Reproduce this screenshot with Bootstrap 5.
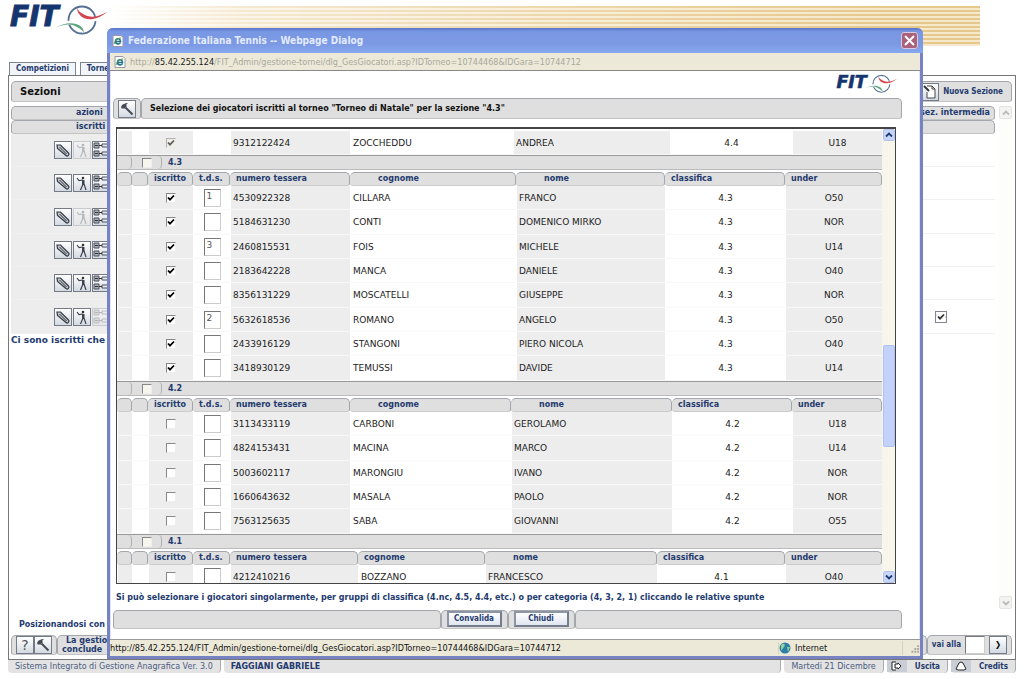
<!DOCTYPE html>
<html lang="it">
<head>
<meta charset="utf-8">
<meta name="viewport" content="width=device-width, initial-scale=1">
<title>Federazione Italiana Tennis</title>
<link href="https://cdn.jsdelivr.net/npm/bootstrap@5.3.0/dist/css/bootstrap.min.css" rel="stylesheet">
<script src="https://cdn.jsdelivr.net/npm/bootstrap@5.3.0/dist/js/bootstrap.bundle.min.js"></script>
<style>
:root{--navy:#233a6e;--bar:#dfdfdf;--line:#a3a7ab;--cell:#ededed}
html{font-size:16px}
body{font:9px/12px "DejaVu Sans",sans-serif;color:#222;background:#fff;min-height:100vh;overflow:hidden}
.tight{font-family:"DejaVu Sans Condensed","DejaVu Sans",sans-serif}
.navy{color:var(--navy)}
.bar{background:var(--bar);border:1px solid var(--line);border-bottom-color:#c4c4c4;border-radius:5px 5px 3px 3px}
.masthead{height:62px;padding:6px 44px 0 10px}
.stripes{height:40px;background:linear-gradient(90deg,#fff 0,rgba(255,255,255,.6) 15%,rgba(255,255,255,.2) 60%,transparent 90%),repeating-linear-gradient(180deg,#e6c88c 0 2px,#f6e8ca 2px 4px)}
.logo{display:block;overflow:visible}
.logo text{font:italic bold 28px "DejaVu Sans",sans-serif;fill:#15356f;stroke:#15356f;stroke-width:1}
.tabs{padding-left:9px;height:13px}
.tabs a{border:1px solid #7d858e;border-bottom:0;background:#f1f4f8;padding:0 6px;line-height:12px;font-size:8px;font-weight:bold;text-decoration:none;color:var(--navy)}
.panel{border:1px solid #777;margin:0 8px;padding:5px 3px 4px 2px}
.ttl{height:21px;padding-left:8px;font-size:10px;color:#111;font-weight:bold}
.colhead{height:14px;font-size:8px;font-weight:bold;color:var(--navy)}
.under-scroll{width:13px;background:#fdfdf9;color:#bbb;margin-bottom:10px}
.sbtn{width:13px;height:13px;padding:0;border:1px solid #e4e4e0;background:#f3f3ef;border-radius:2px;color:inherit;display:flex;align-items:center;justify-content:center}
.item{height:33px;border-bottom:1px solid #f0f0f0}
.item:nth-child(3n){height:34px}
.item .acts{width:110px;background:var(--cell);padding-left:43px;gap:1px}
.ib{width:18px;height:18px;padding:0;border:1px solid #747b87;background:linear-gradient(#fff,#d4dae2);display:flex;align-items:center;justify-content:center;flex:none}
.ib svg{width:16px;height:16px}
.ib:disabled{opacity:.3}
.foot{margin:0 8px 6px;height:13px;font-size:8px;line-height:14px;color:#4b5c80;gap:3px}
.foot>*{background:#e3e3e3;border-right:1px solid #a9adb2;border-radius:0 0 4px 4px;padding:0 7px}
.foot a{color:var(--navy);font-weight:bold;text-decoration:none}
.pic{background:#c9ced6;width:20px}

.dlg{position:absolute;left:107px;right:101px;top:28px;bottom:20px;background:#fff;border:3px solid #7782c3;border-top:0;border-radius:6px 6px 0 0;box-shadow:inset 0 0 0 1px #e0e4f5}
.dtitle{height:25px;margin:0 -3px;padding:0 5px;border-radius:6px 6px 0 0;background:linear-gradient(#5b74c9,#7998e4 15%,#7b98e3 60%,#86a8ee);color:#e3ebff;font-size:10px;font-weight:bold;flex:none}
.closer{width:17px;height:17px;padding:0;border:1px solid #dcc9de;border-radius:3px;background:#a8627c;display:flex;align-items:center;justify-content:center}
.addr{height:18px;flex:none;background:#ece9d8;border-bottom:1px solid #888;font-size:9px;color:#aaa89c;padding-left:4px}
.addr b{font-weight:normal;color:#222}
.dhead{height:27px;flex:none;padding:4px 22px 0 0}
.dtool{height:21px;margin:0 18px 0 3px;flex:none}
.dtool .h{font-size:8px;font-weight:bold;color:#111;padding-left:8px}
.listbox{margin:8px 24px 0 6px;border:1px solid #444;border-top-width:2px;min-height:0}
.rows{overflow:hidden}
.rows table{width:100%;table-layout:fixed;border-collapse:separate;border-spacing:0;font-size:9px;color:#222}
.rows td{height:24px;padding:0 0 0 2px;border-bottom:1px solid #f8f8f8;border-left:1px solid #fff;vertical-align:middle;white-space:nowrap}
.rows tbody tr:nth-child(3n+2) td{height:25px}
.rows td:nth-child(odd){background:var(--cell)}
.rows td:nth-child(n+8),.rows td:nth-child(3),.rows td:nth-child(4){text-align:center;padding:0}
.rows th{height:14px;padding:0 0 0 6px;font-size:8px;line-height:12px;color:var(--navy);background:var(--bar);border:1px solid var(--line);border-bottom-color:#ccc;border-left:0;border-radius:5px 5px 3px 3px;white-space:nowrap}
.rows .name{padding-left:28px}
.rows .first td{height:26px;border-top:2px solid #fff}
.band{height:15px;background:var(--bar);border-top:1px solid #999;border-bottom:1px solid #bbb;margin-bottom:2px;font-size:8px;font-weight:bold;color:var(--navy)}
.band span{border-right:1px solid #b0b0b0;border-radius:4px;height:13px}
.band .b1{width:15px}
.band .b2{width:30px}
.band div{padding-left:6px}
.ck{appearance:none;width:10px;height:10px;margin:0;border:1px solid #888;border-right-color:#eee;border-bottom-color:#eee;background:#fff;display:block}
.ck:checked{background:#fff url("data:image/svg+xml,%3Csvg xmlns='http://www.w3.org/2000/svg' viewBox='0 0 8 8'%3E%3Cpath d='M1 3.5l2 2.2L7 1.5' fill='none' stroke='%23000' stroke-width='1.8'/%3E%3C/svg%3E") center/8px}
.ck:disabled{background-color:#f3f1e4;opacity:.6}
.ck.flat{width:12px;height:12px;border-color:#667;opacity:.8}
.band .ck{background:#f7f5ec}
td .ck{margin:0 auto}
.tds{width:17px;height:18px;border:1px solid #777;border-right-color:#ccc;border-bottom-color:#ccc;background:#fff;padding:0 0 3px 2px;font-size:9px;line-height:12px;color:#555;display:block;margin:0 auto;border-radius:0}
.vscroll{width:13px;background:#f8f6ea;flex:none;padding-left:1px}
.vscroll button{width:12px;height:12px;padding:0;border:1px solid #b3c3f0;background:#c6d5fa;border-radius:2px;display:flex;align-items:center;justify-content:center}
.thumb{height:102px;width:12px;background:#c3d2fb;border:1px solid #b0c2f2;border-radius:2px}
.grow-a{flex:204}
.grow-b{flex:124}
.hint{font-size:8px;font-weight:bold;margin:8px 0 6px 6px;flex:none}
.dbtns{height:19px;margin:0 18px 10px 3px;flex:none}
.mid{width:67px}
.pb{width:55px;height:16px;padding:0;border:2px solid #8b95a4;border-right-color:#737d8c;border-bottom-color:#737d8c;background:linear-gradient(#fff,#dfe5ef);font-size:8px;line-height:10px;font-weight:bold;color:var(--navy)}
.stat{height:17px;flex:none;background:#ece9d8;border-top:1px solid #999;font-size:9px;color:#111}
.zone{width:124px;border-left:1px solid #d5d2c2}
.grip{width:18px;border-left:1px solid #d5d2c2}
.fine{font-size:8px}
.tworow{line-height:9px}
.help{font-size:14px;color:#555}
.page-no{width:20px}
</style>
</head>
<body class="d-flex flex-column">
<svg width="0" height="0" class="position-absolute" aria-hidden="true">
  <defs>
    <symbol id="hammer" viewBox="0 0 16 16"><path d="M2 6c1-3 4-4 7-4L7 4l1 1-3 3-1-1-1 1z" fill="#454b55"/><path d="M6.500 6.500l7 7" stroke="#454b55" stroke-width="2"/></symbol>
    <symbol id="pencil" viewBox="0 0 16 16"><path d="M2 3l3.500 0 8 8c1.500 1.500-1 4-2.500 2.500L2.500 6.500z" fill="#c3c7cd" stroke="#343a44" stroke-width="1.200"/><path d="M4.500 5l7 7" stroke="#343a44"/></symbol>
    <symbol id="player" viewBox="0 0 16 16"><circle cx="9" cy="3" r="1.300" fill="#333"/><path d="M8 5h2.500v5H8z" fill="#3d434d"/><path d="M3 3l2 2.500 4-.5M10 9l2 6M9 9l-2.500 6" fill="none" stroke="#3d434d" stroke-width="1.200"/></symbol>
    <symbol id="draw" viewBox="0 0 16 16"><path d="M1 1h5v5H1zM1 9h5v5H1z" fill="#aab0b9" stroke="#4b515b"/><path d="M9 2h6v3H9zM9 10h6v3H9z" fill="#e8ebef" stroke="#4b515b"/><path d="M2 3.500h3M2 11.500h3M6 3.500h3M6 11.500h3" stroke="#333"/></symbol>
    <symbol id="ie" viewBox="0 0 12 12"><path d="M1 .5h8l2 2v9H1z" fill="#fff" stroke="#99a"/><path d="M3.500 6.500h5c0-4-5-3.500-5 0 0 3 4 3 5 1" fill="none" stroke="#27778e" stroke-width="1.600"/><path d="M2 9c1-4 4-6 7-6" fill="none" stroke="#5a9a3a"/></symbol>
    <symbol id="ball" viewBox="0 0 54 32"><circle cx="28" cy="15" r="13.500" fill="none" stroke="#536f94" stroke-width="1.800"/><path d="M1 23c8-6 24-9 29 4" fill="none" stroke="#fff" stroke-width="4"/><path d="M1 23c8-4 16-5 22-1 4 2 6 4 7 6 0-11-17-13-29-5z" fill="#5da57c"/><path d="M23 5c3 10 16 14 30 3" fill="none" stroke="#fff" stroke-width="4"/><path d="M23 3c1 12 16 16 30 4-9 5-16 6-22 3-4-2-7-4-8-7z" fill="#d3464f"/></symbol>
    <symbol id="up" viewBox="0 0 8 8"><path d="M1 5.500l3-3 3 3" fill="none" stroke="currentColor" stroke-width="1.800"/></symbol>
    <symbol id="down" viewBox="0 0 8 8"><path d="M1 2.500l3 3 3-3" fill="none" stroke="currentColor" stroke-width="1.800"/></symbol>
  </defs>
</svg>

<header class="masthead d-flex">
  <svg class="logo flex-shrink-0" width="98" height="32" viewBox="0 0 98 32" role="img" aria-label="FIT"><text x="0" y="20">FIT</text><use href="#ball" x="44" y="-1" width="54" height="32"/></svg>
  <div class="stripes flex-grow-1"></div>
</header>
<nav class="tabs d-flex tight"><a href="#">Competizioni</a><a href="#" class="ms-1">Tornei</a></nav>

<main class="panel flex-grow-1 d-flex flex-column">
  <div class="d-flex">
    <div class="bar ttl flex-grow-1 d-flex align-items-center">Sezioni</div>
    <div class="bar d-flex align-items-center navy fw-bold tight fine pe-2 gap-1">
      <button class="ib" aria-label="Nuova"><svg viewBox="0 0 16 16"><path d="M5 2h5l3 3v9H5V8M10 2v3h3" fill="#fff" stroke="#444"/><path d="M2 2l5 5" stroke="#333" stroke-width="2"/></svg></button><span>Nuova Sezione</span></div>
  </div>
  <div class="d-flex mt-1 flex-grow-1">
    <div class="flex-grow-1 me-1">
      <div class="bar colhead d-flex justify-content-between align-items-center"><span class="ps-5"><span class="ps-3">azioni</span></span><span class="pe-1">sez. intermedia</span></div>
      <div class="bar colhead d-flex align-items-center ps-5"><span class="ps-3">iscritti</span></div>
      <div id="items"></div>
      <div class="navy fw-bold">Ci sono iscritti che</div>
    </div>
    <div class="under-scroll d-flex flex-column justify-content-between">
      <button class="sbtn" aria-label="Su"><svg width="8" height="8"><use href="#up"/></svg></button>
      <button class="sbtn" aria-label="Giù"><svg width="8" height="8"><use href="#down"/></svg></button>
    </div>
  </div>
  <div class="navy fw-bold fine ps-2 pb-1">Posizionandosi con</div>
  <div class="d-flex fine">
    <div class="bar d-flex align-items-center px-1">
      <button class="ib help" aria-label="Aiuto">?</button>
      <button class="ib" aria-label="Strumenti"><svg><use href="#hammer"/></svg></button>
    </div>
    <div class="bar tworow flex-grow-1 navy fw-bold ps-1"><span class="ps-1">La gestione</span><br>conclude</div>
    <div class="bar d-flex align-items-center navy fw-bold tight px-1 gap-1"><label for="pg">vai alla</label><input id="pg" class="tds page-no"><button class="ib" aria-label="Vai">❯</button></div>
  </div>
</main>
<footer class="foot d-flex">
  <span>Sistema Integrato di Gestione Anagrafica Ver. 3.0</span>
  <span class="flex-grow-1 navy fw-bold">FAGGIANI GABRIELE</span>
  <span>Martedi 21 Dicembre</span>
  <a href="#" class="d-flex gap-2 ps-0 tight"><svg class="pic" height="12" viewBox="0 0 20 12"><path d="M9 2H5v8h4M8 4h3V3l3 3-3 3V8H8z" fill="#fff" stroke="#222"/></svg>Uscita</a>
  <a href="#" class="d-flex gap-2 ps-0 tight"><svg class="pic" height="12" viewBox="0 0 20 12"><path d="M10 2l2 1 3 6-2 1H7L5 9l3-6z" fill="#fff" stroke="#222"/></svg>Credits</a>
</footer>

<section class="dlg d-flex flex-column" role="dialog" aria-label="Federazione Italiana Tennis">
  <div class="dtitle d-flex align-items-center gap-1 tight"><svg width="12" height="12"><use href="#ie"/></svg><span class="flex-grow-1">Federazione Italiana Tennis -- Webpage Dialog</span>
    <button class="closer" aria-label="Chiudi finestra"><svg width="11" height="11"><path d="M1 1l9 9M10 1l-9 9" stroke="#fff" stroke-width="2"/></svg></button></div>
  <div class="addr d-flex align-items-center gap-1 tight"><svg width="12" height="12"><use href="#ie"/></svg><span>http://<b>85.42.255.124</b>/FIT_Admin/gestione-tornei/dlg_GesGiocatori.asp?IDTorneo=10744468&amp;IDGara=10744712</span></div>
  <div class="dhead d-flex justify-content-end"><svg class="logo" width="62" height="20" viewBox="0 0 98 32" role="img" aria-label="FIT"><text x="0" y="20">FIT</text><use href="#ball" x="44" y="-1" width="54" height="32"/></svg></div>
  <div class="dtool d-flex">
    <div class="bar d-flex align-items-center px-1"><button class="ib" aria-label="Strumenti"><svg><use href="#hammer"/></svg></button></div>
    <div class="bar h flex-grow-1 d-flex align-items-center">Selezione dei giocatori iscritti al torneo "Torneo di Natale" per la sezione "4.3"</div>
  </div>
  <div class="listbox d-flex flex-grow-1">
    <div class="rows flex-grow-1" id="rows"></div>
    <div class="vscroll d-flex flex-column">
      <button class="navy" aria-label="Scorri su"><svg width="8" height="8"><use href="#up"/></svg></button>
      <div class="grow-a"></div><div class="thumb"></div><div class="grow-b"></div>
      <button class="navy" aria-label="Scorri giù"><svg width="8" height="8"><use href="#down"/></svg></button>
    </div>
  </div>
  <div class="hint navy">Si può selezionare i giocatori singolarmente, per gruppi di classifica (4.nc, 4.5, 4.4, etc.) o per categoria (4, 3, 2, 1) cliccando le relative spunte</div>
  <div class="dbtns d-flex">
    <div class="bar flex-fill"></div>
    <div class="bar mid d-flex justify-content-center"><button class="pb tight">Convalida</button></div>
    <div class="bar mid d-flex justify-content-center"><button class="pb tight">Chiudi</button></div>
    <div class="bar flex-fill"></div>
  </div>
  <div class="stat d-flex align-items-center tight">
    <span class="flex-grow-1">http://85.42.255.124/FIT_Admin/gestione-tornei/dlg_GesGiocatori.asp?IDTorneo=10744468&amp;IDGara=10744712</span>
    <span class="zone d-flex align-items-center gap-1"><svg width="12" height="12"><circle cx="6" cy="6" r="5.500" fill="#2d7fa5"/><path d="M2 3c3-3 5 0 3 2S3 9 2 8zM8 5l3 0-2 5z" fill="#8fd09a"/></svg>Internet</span>
    <svg class="grip" width="18" height="14" viewBox="0 0 18 14"><path d="M15 5h2M12 8h2M15 8h2M9 11h2M12 11h2M15 11h2" stroke="#aaa79a" stroke-width="2"/></svg>
  </div>
</section>

<script>
// Competition sections listed behind the dialog: which action buttons are off, and the last-column tick
const items = [[1], [], [1], [], [], [2]];
const icons = [['pencil', 'Modifica'], ['player', 'Giocatori'], ['draw', 'Tabellone']];
document.getElementById('items').innerHTML = items.map((off, i) => `
  <div class="item d-flex"><div class="acts d-flex align-items-center">${icons.map(([id, label], k) =>
    `<button class="ib" aria-label="${label}" ${off.includes(k) ? 'disabled' : ''}><svg><use href="#${id}"/></svg></button>`).join('')}</div>
    <div class="flex-grow-1 d-flex align-items-center justify-content-end pe-5">${i === 5 ? '<input type="checkbox" class="ck flat" aria-label="Sezione intermedia" checked>' : ''}</div></div>`).join('');

// Player groups: band title, column widths, ticked state and players
const groups = [
  {cols: [15,16,45,37,120,163,157,122,90], cls: '4.4', on: true, off: true, list: [['', '9312122424', 'ZOCCHEDDU', 'ANDREA', 'U18']]},
  {t: '4.3', cols: [15,16,45,37,120,166,149,120,97], cls: '4.3', on: true, list: [
    ['1','4530922328','CILLARA','FRANCO','O50'], ['','5184631230','CONTI','DOMENICO MIRKO','NOR'],
    ['3','2460815531','FOIS','MICHELE','U14'], ['','2183642228','MANCA','DANIELE','O40'],
    ['','8356131229','MOSCATELLI','GIUSEPPE','NOR'], ['2','5632618536','ROMANO','ANGELO','O50'],
    ['','2433916129','STANGONI','PIERO NICOLA','O40'], ['','3418930129','TEMUSSI','DAVIDE','U14']]},
  {t: '4.2', cols: [15,16,45,37,120,161,161,120,90], cls: '4.2', list: [
    ['','3113433119','CARBONI','GEROLAMO','U18'], ['','4824153431','MACINA','MARCO','U14'],
    ['','5003602117','MARONGIU','IVANO','NOR'], ['','1660643632','MASALA','PAOLO','NOR'],
    ['','7563125635','SABA','GIOVANNI','O55']]},
  {t: '4.1', cols: [15,16,45,37,128,127,172,128,97], cls: '4.1', list: [['','4212410216','BOZZANO','FRANCESCO','O40']]}
];
const head = ['', '', 'iscritto', 't.d.s.', 'numero tessera', 'cognome', 'nome', 'classifica', 'under'];
document.getElementById('rows').innerHTML = groups.map(g => `
  ${g.t ? `<div class="band d-flex align-items-center"><span class="b1"></span><span class="b2 d-flex align-items-center justify-content-center"><input type="checkbox" class="ck" aria-label="Gruppo ${g.t}"></span><div>${g.t}</div></div>` : ''}
  <table class="${g.t ? '' : 'first'}"><colgroup>${g.cols.map(w => `<col style="width:${w}px">`).join('')}</colgroup>
  ${g.t ? `<thead><tr>${head.map((h, i) => `<th class="${i === 6 || (i === 5 && g.t !== '4.1') ? 'name' : ''}">${h}</th>`).join('')}</tr></thead>` : ''}
  <tbody>${g.list.map(([s, n, c, f, u]) => `<tr><td></td><td></td>
    <td><input type="checkbox" class="ck" aria-label="Iscritto ${c}" ${g.on ? 'checked' : ''} ${g.off ? 'disabled' : ''}></td>
    <td>${g.off ? '' : `<input type="text" class="tds" aria-label="Testa di serie ${c}" value="${s}">`}</td>
    <td>${n}</td><td>${c}</td><td>${f}</td><td>${g.cls}</td><td>${u}</td></tr>`).join('')}</tbody></table>`).join('');
</script>
</body>
</html>
